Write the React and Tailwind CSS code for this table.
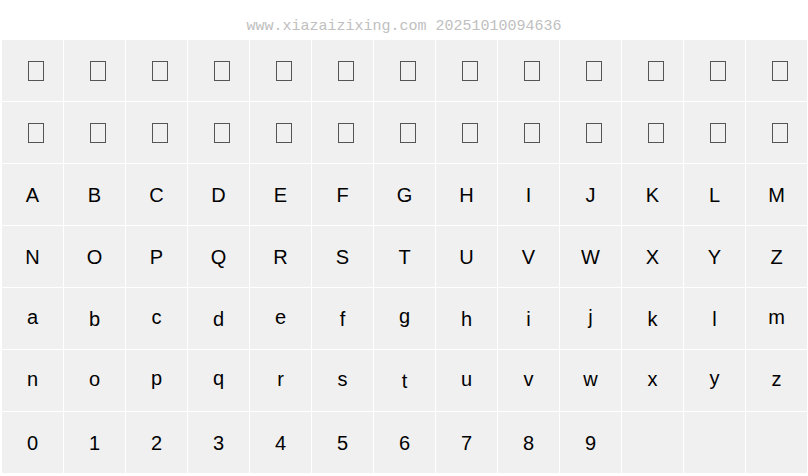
import React from "react";

const rows = [
  Array(13).fill(null),
  Array(13).fill(null),
  "ABCDEFGHIJKLM".split(""),
  "NOPQRSTUVWXYZ".split(""),
  "abcdefghijklm".split(""),
  "nopqrstuvwxyz".split(""),
  [..."0123456789".split(""), "", "", ""],
];

// nudge glyphs so their ink sits in the middle of the cell
function shift(ch) {
  if ("gpqy".includes(ch)) return "-translate-y-[3px]";
  if ("acemnorsuvwxz".includes(ch)) return "-translate-y-[2px]";
  if (ch === "j") return "-translate-y-[2px]";
  return "";
}

function Cell({ ch }) {
  return (
    <div className="h-[61px] bg-[#f0f0f0] flex items-center justify-center">
      {ch === null ? (
        <div className="ml-[7px] w-[16px] h-[20px] border border-[#555]" />
      ) : (
        <span className={`text-[20px] leading-[20px] text-black ${shift(ch)}`}>
          {ch}
        </span>
      )}
    </div>
  );
}

export default function App() {
  return (
    <div
      className="w-[808px] h-[476px] bg-white overflow-hidden"
      style={{ fontFamily: '"Liberation Sans", Arial, sans-serif' }}
    >
      {/* Watermark header */}
      <div
        className="h-[40px] pt-[18px] text-center text-[15px] leading-[17px] text-[#c0c0c0]"
        style={{ fontFamily: '"Liberation Mono", monospace' }}
      >
        www.xiazaizixing.com 20251010094636
      </div>

      {/* Glyph grid */}
      <div className="pl-[2px] grid grid-cols-[repeat(13,61px)] gap-[1px]">
        {rows.flat().map((ch, i) => (
          <Cell key={i} ch={ch} />
        ))}
      </div>
    </div>
  );
}
